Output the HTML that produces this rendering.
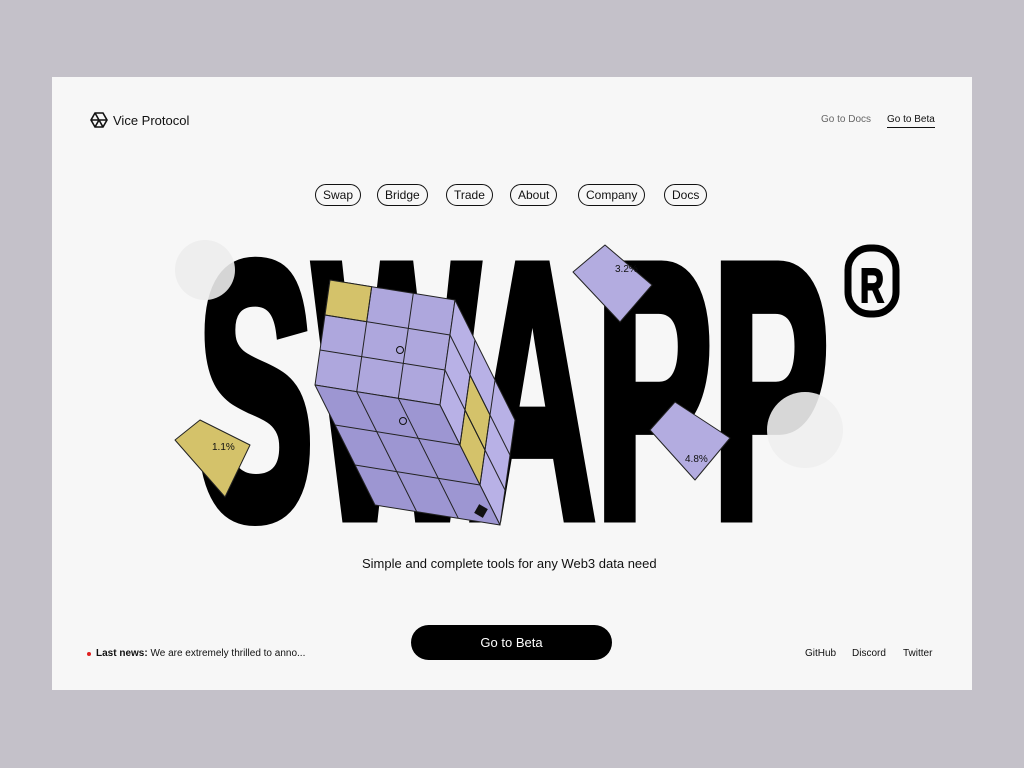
<!DOCTYPE html>
<html><head><meta charset="utf-8"><style>
*{margin:0;padding:0;box-sizing:border-box}
body{width:1024px;height:768px;background:#c4c1c9;font-family:"Liberation Sans",sans-serif;position:relative;overflow:hidden}
.card{position:absolute;left:52px;top:77px;width:920px;height:613px;background:#f7f7f7}
.a{position:absolute;color:#111;font-size:11px}
.pill{position:absolute;top:184px;height:22px;border:1px solid #111;border-radius:11px;font-size:12px;line-height:20px;padding:0 7px;color:#111}
</style></head><body>
<div class="card"></div>
<svg style="position:absolute;left:90px;top:111px" width="18" height="18" viewBox="0 0 18 18" fill="none" stroke="#111" stroke-width="1.6"><path d="M5 2L13 2L17 9L13 16L5 16L1 9Z M5 2L9 9L17 9 M1 9L9 9L5 16 M9 9L13 16"/></svg>
<div class="a" style="left:113px;top:113px;font-size:13px">Vice Protocol</div>
<div class="a" style="left:821px;top:114px;color:#666;font-size:10px">Go to Docs</div>
<div class="a" style="left:887px;top:114px;font-size:10px;border-bottom:1px solid #111;padding-bottom:2px">Go to Beta</div>
<div class="pill" style="left:315px">Swap</div>
<div class="pill" style="left:377px">Bridge</div>
<div class="pill" style="left:446px">Trade</div>
<div class="pill" style="left:510px">About</div>
<div class="pill" style="left:578px">Company</div>
<div class="pill" style="left:664px">Docs</div>
<svg style="position:absolute;left:0;top:0" width="1024" height="768">
<text x="197" y="516" font-family="Liberation Sans" font-weight="bold" font-size="362" textLength="632" lengthAdjust="spacingAndGlyphs" fill="#000" stroke="#000" stroke-width="13" stroke-linejoin="miter">SWAPP</text>
<rect x="848" y="248" width="48" height="66" rx="22" fill="none" stroke="#000" stroke-width="7"/>
<text x="872" y="302" text-anchor="middle" font-weight="bold" font-size="48" fill="#000" stroke="#000" stroke-width="2" textLength="24" lengthAdjust="spacingAndGlyphs">R</text>
<g stroke="#222" stroke-width="1" stroke-linejoin="round">
<polygon points="440,405 315,385 330,280 455,300" fill="#aea7dd"/>
<polygon points="440,405 455,300 515,420 500,525" fill="#b8b1e6"/>
<polygon points="440,405 500,525 375,505 315,385" fill="#9d96d2"/>
<polygon points="330,280 371.7,286.7 366.7,321.7 325,315" fill="#d4c26a"/>
<polygon points="460,445 480,485 485,450 465,410" fill="#d4c26a"/>
<polygon points="465,410 485,450 490,415 470,375" fill="#d4c26a"/>
<path fill="none" d="M398.3,398.3L413.3,293.3M356.7,391.7L371.7,286.7M445,370L320,350M450,335L325,315M445,370L505,490M450,335L510,455M460,445L475,340M480,485L495,380M460,445L335,425M480,485L355,465M398.3,398.3L458.3,518.3M356.7,391.7L416.7,511.7"/>
<polygon points="573,272 605,245 652,285 620,322" fill="#b3ace0"/>
<polygon points="175,440 200,420 250,445 225,497" fill="#d4c26a"/>
<polygon points="650,430 675,402 730,438 695,480" fill="#b3ace0"/>
</g>
<circle cx="400" cy="350" r="3.5" fill="none" stroke="#111"/>
<circle cx="403" cy="421" r="3.5" fill="none" stroke="#111"/>
<rect x="476" y="506" width="10" height="10" fill="#111" transform="rotate(30 481 511)"/>
<text x="212" y="450" font-size="10" fill="#111">1.1%</text>
<text x="615" y="272" font-size="10" fill="#111">3.2%</text>
<text x="685" y="462" font-size="10" fill="#111">4.8%</text>
<circle cx="205" cy="270" r="30" fill="#ececec" opacity=".9"/>
<circle cx="805" cy="430" r="38" fill="#eeeeee" opacity=".9"/>
</svg>
<div class="a" style="left:362px;top:556px;font-size:13px">Simple and complete tools for any Web3 data need</div>
<div style="position:absolute;left:411px;top:625px;width:201px;height:35px;border-radius:18px;background:#000;color:#fff;font-size:13px;text-align:center;line-height:35px">Go to Beta</div>
<div style="position:absolute;left:87px;top:652px;width:4px;height:4px;border-radius:2px;background:#e02020"></div>
<div class="a" style="left:96px;top:648px;font-size:10px"><b>Last news:</b> We are extremely thrilled to anno...</div>
<div class="a" style="left:805px;top:648px;font-size:10px">GitHub</div>
<div class="a" style="left:852px;top:648px;font-size:10px">Discord</div>
<div class="a" style="left:903px;top:648px;font-size:10px">Twitter</div>
</body></html>
